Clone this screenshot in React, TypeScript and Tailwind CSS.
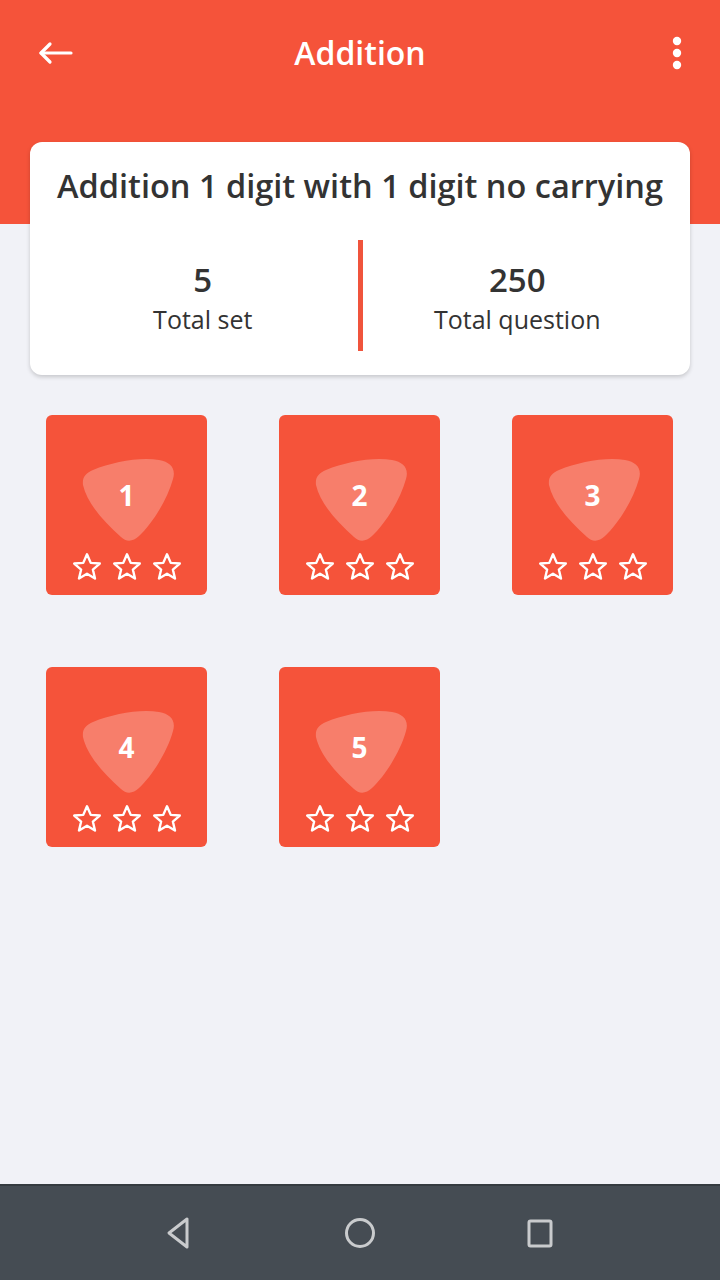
import React from 'react';

function Shield() {
  return (
    <svg width="96" height="86" viewBox="0 0 96 86" className="block">
      <path
        d="M4 28 C3 20 7 16 14 13 C34 5 60 0 80 3 C92 5 97 12 94 22 C88 44 72 68 60 79 C54 85 47 85 42 80 C24 64 8 46 4 28 Z"
        fill="#FFFFFF"
        fillOpacity="0.25"
      />
    </svg>
  );
}

function Star() {
  return (
    <svg width="32" height="32" viewBox="0 0 24 24" className="block">
      <path
        d="M12 2.5 L14.8 8.9 L21.6 9.4 L16.4 13.9 L18 20.6 L12 17 L6 20.6 L7.6 13.9 L2.4 9.4 L9.2 8.9 Z"
        fill="none"
        stroke="#FFFFFF"
        strokeWidth="1.8"
        strokeLinejoin="round"
      />
    </svg>
  );
}

function SetTile({ n }: { n: number }) {
  return (
    <div className="w-[161px] h-[180px] rounded-[6px] bg-[#F5533A] flex flex-col items-center pt-[42px]">
      <div className="relative w-[96px] h-[86px]">
        <Shield />
        <span className="absolute left-0 right-0 top-[21px] text-center text-white text-[28px] leading-[34px] font-bold">
          {n}
        </span>
      </div>
      <div className="flex gap-[8px] mt-[8px]">
        <Star />
        <Star />
        <Star />
      </div>
    </div>
  );
}

export default function App() {
  const sets = [1, 2, 3, 4, 5];
  return (
    <div
      className="w-[720px] h-[1280px] flex flex-col bg-[#F1F2F7] overflow-hidden"
      style={{ fontFamily: '"Open Sans", "Noto Sans", sans-serif' }}
    >
      <div className="h-[224px] bg-[#F5533A] shrink-0">
        <div className="h-[106px] flex items-center justify-between px-[38px] relative">
          <svg width="36" height="24" viewBox="0 0 36 24" fill="none" stroke="#fff" strokeWidth="3.2" strokeLinecap="round" strokeLinejoin="round">
            <path d="M3 12 H33" />
            <path d="M12 3 L3 12 L12 21" />
          </svg>
          <h1 className="absolute left-0 right-0 text-center text-white text-[32px] font-semibold leading-[40px] pointer-events-none">
            Addition
          </h1>
          <svg width="10" height="34" viewBox="0 0 10 34" fill="#fff">
            <circle cx="5" cy="5" r="4.2" />
            <circle cx="5" cy="17" r="4.2" />
            <circle cx="5" cy="29" r="4.2" />
          </svg>
        </div>
      </div>

      <div className="mx-[30px] -mt-[82px] bg-white rounded-[12px] shadow-[0_2px_4px_rgba(0,0,0,0.18)] pt-[24px] pb-[24px] px-[18px]">
        <h2 className="text-center text-[#333333] text-[32.5px] font-semibold leading-[40px] whitespace-nowrap">
          Addition 1 digit with 1 digit no carrying
        </h2>
        <div className="flex mt-[34px] h-[111px]">
          <div className="flex-1 flex flex-col items-center pt-[21px] text-[#333333]">
            <span className="text-[33px] font-semibold leading-[38px]">5</span>
            <span className="text-[25px] leading-[36px] mt-[2px]">Total set</span>
          </div>
          <div className="w-[5px] h-[111px] bg-[#F0543C]" />
          <div className="flex-1 flex flex-col items-center pt-[21px] text-[#333333]">
            <span className="text-[33px] font-semibold leading-[38px]">250</span>
            <span className="text-[25px] leading-[36px] mt-[2px]">Total question</span>
          </div>
        </div>
      </div>

      <div className="grid grid-cols-[161px_161px_161px] gap-x-[72px] gap-y-[72px] px-[46px] mt-[40px]">
        {sets.map((n) => (
          <SetTile key={n} n={n} />
        ))}
      </div>

      <div className="mt-auto h-[96px] shrink-0 bg-[#454C53] border-t-2 border-[#353B40] flex items-center justify-center gap-[140px]">
        <svg width="40" height="40" viewBox="0 0 40 40" fill="none" stroke="#C9CBCD" strokeWidth="3" strokeLinejoin="round">
          <path d="M27 6 L27 34 L9 20 Z" />
        </svg>
        <svg width="40" height="40" viewBox="0 0 40 40" fill="none" stroke="#C9CBCD" strokeWidth="3">
          <circle cx="20" cy="20" r="13.5" />
        </svg>
        <svg width="40" height="40" viewBox="0 0 40 40" fill="none" stroke="#C9CBCD" strokeWidth="3">
          <rect x="9" y="8" width="22" height="25" rx="1.5" />
        </svg>
      </div>
    </div>
  );
}
